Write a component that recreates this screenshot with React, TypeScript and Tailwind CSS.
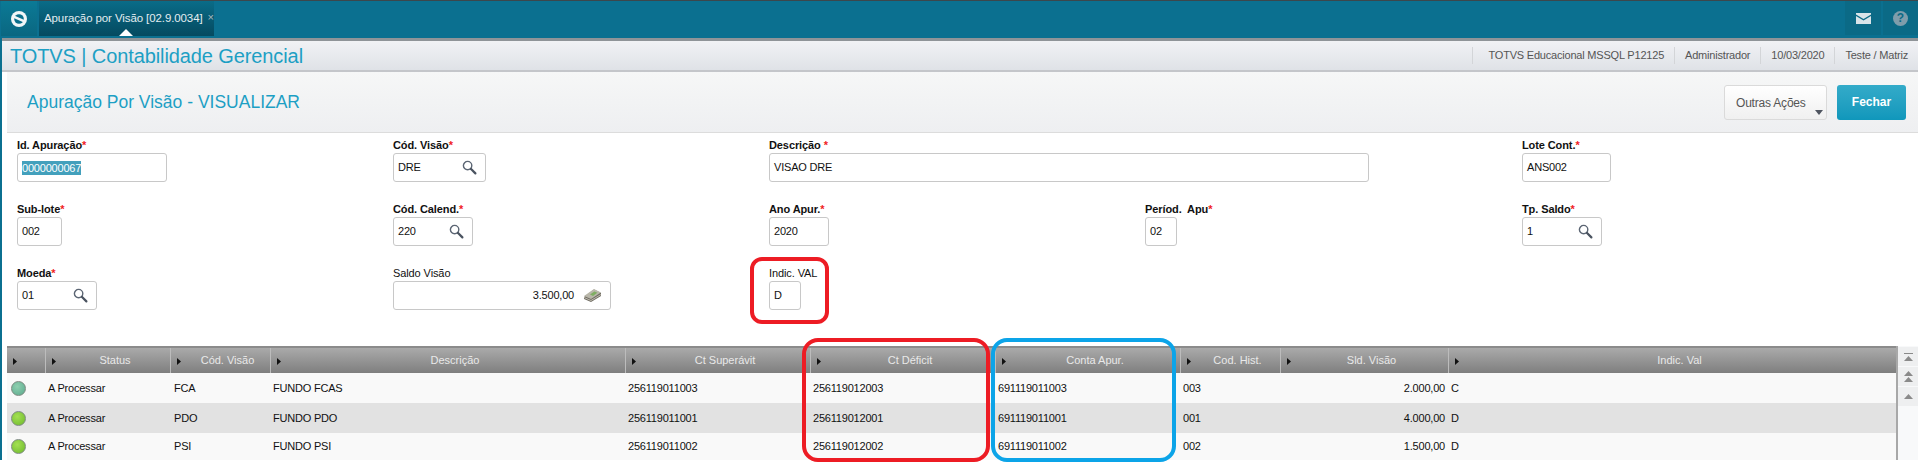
const GRID =
  'grid grid-cols-[38px_125px_100px_355px_185px_185px_185px_100px_168px_448px]';

const headers = [
  '',
  'Status',
  'Cód. Visão',
  'Descrição',
  'Ct Superávit',
  'Ct Déficit',
  'Conta Apur.',
  'Cod. Hist.',
  'Sld. Visão',
  'Indic. Val',
];

const rows = [
  { led: 'bg-[radial-gradient(circle_at_40%_35%,#8fd0b0,#5aa88c)]', h: 'h-[30px] bg-[#f9f9f9]', cod: 'FCA', desc: 'FUNDO FCAS', sup: '256119011003', def: '256119012003', apur: '691119011003', hist: '003', sld: '2.000,00', ind: 'C' },
  { led: 'bg-[radial-gradient(circle_at_40%_35%,#a4e052,#6cb82c)]', h: 'h-[30px] bg-[#e2e2e2]', cod: 'PDO', desc: 'FUNDO PDO', sup: '256119011001', def: '256119012001', apur: '691119011001', hist: '001', sld: '4.000,00', ind: 'D' },
  { led: 'bg-[radial-gradient(circle_at_40%_35%,#a4e052,#6cb82c)]', h: 'h-[27px] bg-[#f9f9f9]', cod: 'PSI', desc: 'FUNDO PSI', sup: '256119011002', def: '256119012002', apur: '691119011002', hist: '002', sld: '1.500,00', ind: 'D' },
];

const Lens = () => (
  <svg width="15" height="15" viewBox="0 0 15 15" className="shrink-0">
    <circle cx="5.6" cy="5.6" r="4.2" fill="none" stroke="#5b6573" strokeWidth="1.4" />
    <path d="M8.8 8.8 L13.4 13.4" stroke="#4a5360" strokeWidth="2.2" strokeLinecap="round" />
  </svg>
);

const Money = () => (
  <svg width="19" height="15" viewBox="0 0 19 15" className="shrink-0">
    <path d="M1 9 L11 1.5 L18 5 L18 8 L8 14 L1 11 Z" fill="#6f6b62" />
    <path d="M1 8 L11 1 L18 4.5 L8 11 Z" fill="#b9b7aa" />
    <path d="M7 6.6 L11.4 3.4 L14.4 4.8 L10 8 Z" fill="#7fae62" />
    <path d="M1 9.5 L8 12.5 L18 6.5" fill="none" stroke="#d2cfc2" strokeWidth="0.8" />
  </svg>
);

const Arrow = () => (
  <svg width="4" height="7" viewBox="0 0 4 7" className="shrink-0">
    <path d="M0 0 L4 3.5 L0 7 Z" fill="#111" />
  </svg>
);

const ScrollBtn = ({ double, bar }: { double?: boolean; bar?: boolean }) => (
  <div className="h-[19px] mb-px bg-[#eeeff0] flex flex-col items-center justify-center gap-px">
    {bar && <div className="w-[9px] h-px bg-[#8a8a8a] mb-px" />}
    <svg width="9" height="5" viewBox="0 0 9 5">
      <path d="M4.5 0 L9 5 L0 5 Z" fill="#8a8a8a" />
    </svg>
    {double && (
      <svg width="9" height="5" viewBox="0 0 9 5">
        <path d="M4.5 0 L9 5 L0 5 Z" fill="#8a8a8a" />
      </svg>
    )}
  </div>
);

const Label = ({ text, req, sep }: { text: string; req?: boolean; sep?: boolean }) => (
  <div className={`h-[15px] leading-[15px] whitespace-pre text-[11px] tracking-[-0.1px] text-[#111] ${req ? 'font-bold' : ''}`}>
    {text}
    {req && <span className="text-[#f01c24]">{sep ? ' *' : '*'}</span>}
  </div>
);

const Input = ({ w, children }: { w: string; children: React.ReactNode }) => (
  <div className={`${w} h-[29px] bg-white border border-[#c8c8c8] rounded-[3px] flex items-center justify-between pl-[4px] pr-[8px] text-[11px] tracking-[-0.2px] text-[#111]`}>
    {children}
  </div>
);

export default function App() {
  return (
    <div className="w-[1918px] h-[464px] overflow-hidden bg-white font-['Liberation_Sans',Arial,sans-serif]">
      {/* top bar */}
      <div className="h-[38px] border-t border-[#3c474c] bg-[#0b7090] flex items-start pl-px">
        <div className="w-[36px] h-[35px] bg-gradient-to-b from-[#0b7a96] to-[#0a6781] flex items-center justify-center">
          <svg width="18" height="18" viewBox="0 0 18 18">
            <circle cx="9" cy="9" r="8" fill="#f2f6f7" />
            <circle cx="9" cy="9" r="4.8" fill="#0a6f8b" />
            <path d="M3 6.4 L15 11.6" stroke="#f2f6f7" strokeWidth="2.6" />
          </svg>
        </div>
        <div className="relative ml-[2px] w-[175px] h-[35px] bg-gradient-to-b from-[#0a6c88] to-[#054a60] flex items-center pl-[5px] text-[11.5px] tracking-[-0.1px] whitespace-nowrap text-[#e3edf1]">
          Apuração por Visão [02.9.0034]
          <span className="ml-[5px] mb-[3px] text-[#aab8bf] text-[11px] leading-none">×</span>
          <div className="absolute left-[80px] bottom-0 w-0 h-0 border-x-[7px] border-x-transparent border-b-[7px] border-b-white" />
        </div>
        <div className="ml-auto flex">
          <div className="w-[36px] h-[34px] bg-[#0b6a86] flex items-center justify-center">
            <svg width="15" height="11" viewBox="0 0 15 11">
              <path d="M0 0 H15 V1.6 L7.5 6 L0 1.6 Z" fill="#d9e4e9" />
              <path d="M0 3 L7.5 7.4 L15 3 V11 H0 Z" fill="#d9e4e9" />
            </svg>
          </div>
          <div className="ml-[2px] w-[35px] h-[34px] bg-[#0b6a86] flex items-center justify-center">
            <div className="w-[15px] h-[15px] rounded-full bg-[#7f9dab] text-[#0b6a86] text-[12px] font-bold leading-[15px] text-center">?</div>
          </div>
        </div>
      </div>

      <div className="h-[422px] bg-[#0b7090] pl-[2px]">
        <div className="h-full bg-white">
          {/* module header */}
          <div className="h-[34px] border-t-[3px] border-b-2 border-t-[#8f9498] border-b-[#c4c6ca] bg-gradient-to-b from-[#f1f2f5] to-[#dfe2e7] flex items-center pl-[8px] pr-[10px]">
            <span className="text-[20px] tracking-[-0.1px] text-[#1d9fc4]">TOTVS | Contabilidade Gerencial</span>
            <div className="ml-auto flex items-center text-[11px] tracking-[-0.2px] text-[#555] h-[16px]">
              <span className="border-l border-[#d3d5d8] pl-[15px] pr-[10px]">TOTVS Educacional MSSQL P12125</span>
              <span className="border-l border-[#d3d5d8] pl-[10px] pr-[10px]">Administrador</span>
              <span className="border-l border-[#d3d5d8] pl-[10px] pr-[10px]">10/03/2020</span>
              <span className="border-l border-[#d3d5d8] pl-[10px]">Teste / Matriz</span>
            </div>
          </div>

          {/* title panel */}
          <div className="ml-[5px] h-[61px] border-b border-[#dcdcdc] bg-gradient-to-b from-[#f6f7f7] to-[#eeeff1] flex items-start pl-[20px] pr-[12px]">
            <span className="mt-[19px] text-[17.5px] leading-[22px] text-[#1d9fc4]">Apuração Por Visão - VISUALIZAR</span>
            <div className="ml-auto mt-[13px] flex gap-[10px]">
              <div className="relative w-[103px] h-[35px] border border-[#dadada] rounded-[3px] bg-gradient-to-b from-white to-[#f0f0f0] pl-[11px] text-[12px] tracking-[-0.2px] leading-[35px] text-[#555]">
                Outras Ações
                <div className="absolute right-[3px] bottom-[4px] w-0 h-0 border-x-[4px] border-x-transparent border-t-[5px] border-t-[#4f5560]" />
              </div>
              <div className="w-[69px] h-[35px] rounded-[3px] bg-gradient-to-b from-[#33abc9] to-[#0f97bb] text-white text-[12px] font-bold leading-[35px] text-center">
                Fechar
              </div>
            </div>
          </div>

          {/* form */}
          <div className="pl-[15px] pt-[5px] grid grid-cols-[376px_376px_376px_377px_376px] gap-y-[20px]">
            <div>
              <Label text="Id. Apuração" req />
              <Input w="w-[150px]">
                <span className="bg-[#43a0bc] text-white leading-[14px]">0000000067</span>
              </Input>
            </div>
            <div>
              <Label text="Cód. Visão" req />
              <Input w="w-[93px]">
                DRE
                <Lens />
              </Input>
            </div>
            <div className="col-span-2">
              <Label text="Descrição" req sep />
              <Input w="w-[600px]">VISAO DRE</Input>
            </div>
            <div>
              <Label text="Lote Cont." req />
              <Input w="w-[89px]">ANS002</Input>
            </div>

            <div>
              <Label text="Sub-lote" req />
              <Input w="w-[45px]">002</Input>
            </div>
            <div>
              <Label text="Cód. Calend." req />
              <Input w="w-[80px]">
                220
                <Lens />
              </Input>
            </div>
            <div>
              <Label text="Ano Apur." req />
              <Input w="w-[60px]">2020</Input>
            </div>
            <div>
              <Label text="Períod.  Apu" req />
              <Input w="w-[32px]">02</Input>
            </div>
            <div>
              <Label text="Tp. Saldo" req />
              <Input w="w-[80px]">
                1
                <Lens />
              </Input>
            </div>

            <div>
              <Label text="Moeda" req />
              <Input w="w-[80px]">
                01
                <Lens />
              </Input>
            </div>
            <div>
              <Label text="Saldo Visão" />
              <Input w="w-[218px]">
                <span className="ml-auto mr-[9px]">3.500,00</span>
                <Money />
              </Input>
            </div>
            <div className="relative">
              <Label text="Indic. VAL" />
              <Input w="w-[32px]">D</Input>
              <div className="absolute left-[-19px] top-[-9px] w-[79px] h-[67px] border-4 border-[#ed1c24] rounded-[12px]" />
            </div>
          </div>

          {/* grid */}
          <div className="relative mt-[36px] ml-[5px] flex">
            <div className="w-[1889px] text-[11px] tracking-[-0.2px] text-[#111]">
              <div className={`${GRID} h-[27px] border-t-2 border-[#8b8b8b] bg-gradient-to-b from-[#aaaaaa] to-[#7f7f7f] text-[#e9e9e9] tracking-normal`}>
                {headers.map((h, i) => (
                  <div key={i} className={`relative h-full flex items-center justify-center pl-[14px] ${i ? 'border-l border-[#bcbcbc]' : ''}`}>
                    <div className="absolute left-[6px] top-[10px] flex">
                      <Arrow />
                    </div>
                    {h}
                  </div>
                ))}
              </div>
              {rows.map((r) => (
                <div key={r.cod} className={`${GRID} ${r.h} items-center`}>
                  <div className="pl-[4px]">
                    <div className={`w-[15px] h-[15px] rounded-full border border-[#7d8a80] ${r.led}`} />
                  </div>
                  <div className="px-[3px]">A Processar</div>
                  <div className="px-[4px]">{r.cod}</div>
                  <div className="px-[3px]">{r.desc}</div>
                  <div className="px-[3px]">{r.sup}</div>
                  <div className="px-[3px]">{r.def}</div>
                  <div className="px-[3px]">{r.apur}</div>
                  <div className="px-[3px]">{r.hist}</div>
                  <div className="px-[3px] text-right">{r.sld}</div>
                  <div className="px-[3px]">{r.ind}</div>
                </div>
              ))}
            </div>
            <div className="w-[22px] border-l-2 border-[#a8a8a8] bg-[#f8f9fa] pt-[1px]">
              <ScrollBtn bar />
              <ScrollBtn double />
              <ScrollBtn />
            </div>

            {/* highlighted columns */}
            <div className="absolute left-[795px] top-[-8px] w-[188px] h-[124px] border-4 border-[#ed1c24] rounded-[16px]" />
            <div className="absolute left-[984px] top-[-8px] w-[185px] h-[124px] border-4 border-[#0ca4e8] rounded-[16px]" />
          </div>
        </div>
      </div>
    </div>
  );
}
